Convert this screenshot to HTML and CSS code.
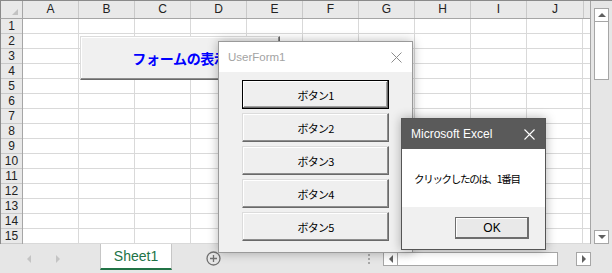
FILE: index.html
```html
<!DOCTYPE html>
<html lang="ja">
<head>
    <meta charset="UTF-8">
    <title>Excel - UserForm</title>
    <link rel="stylesheet" href="styles.css">
</head>
<body>
<div class="excel">
    <div class="main">
        <div class="sheet">
            <div class="corner"><span class="tri"></span></div>
            <div class="colheads">
                <div class="ch">A</div>
                <div class="ch">B</div>
                <div class="ch">C</div>
                <div class="ch">D</div>
                <div class="ch">E</div>
                <div class="ch">F</div>
                <div class="ch">G</div>
                <div class="ch">H</div>
                <div class="ch">I</div>
                <div class="ch wide">J</div>
            </div>
            <div class="rowheads">
                <div class="rh">1</div>
                <div class="rh">2</div>
                <div class="rh">3</div>
                <div class="rh">4</div>
                <div class="rh">5</div>
                <div class="rh">6</div>
                <div class="rh">7</div>
                <div class="rh">8</div>
                <div class="rh">9</div>
                <div class="rh">10</div>
                <div class="rh">11</div>
                <div class="rh">12</div>
                <div class="rh">13</div>
                <div class="rh">14</div>
                <div class="rh">15</div>
            </div>
            <div class="cells">
                <button class="form-btn">フォームの表示</button>
            </div>
        </div>
        <div class="vscroll">
            <div class="sb-btn"><span class="arr up"></span></div>
            <div class="vthumb"></div>
            <div class="vtrack"></div>
            <div class="sb-btn"><span class="arr down"></span></div>
        </div>
    </div>

    <div class="tabbar">
        <div class="nav">
            <span class="arr left light"></span>
            <span class="arr right light"></span>
        </div>
        <div class="tab">Sheet1</div>
        <div class="add">
            <svg width="15" height="15" viewBox="0 0 15 15">
                <circle cx="7.5" cy="7.5" r="6.5" fill="none" stroke="#707070" stroke-width="1.3"/>
                <path d="M7.5 4v7M4 7.5h7" stroke="#707070" stroke-width="1.3"/>
            </svg>
        </div>
        <div class="spacer"></div>
        <div class="dots"><span></span><span></span><span></span></div>
        <div class="hscroll">
            <div class="sb-btn"><span class="arr left"></span></div>
            <div class="hthumb"></div>
            <div class="htrack"></div>
            <div class="sb-btn"><span class="arr right"></span></div>
        </div>
        <div class="br"></div>
    </div>

    <div class="userform">
        <div class="uf-title">
            <span>UserForm1</span>
            <svg width="11" height="11" viewBox="0 0 11 11">
                <path d="M0.5 0.5l10 10M10.5 0.5l-10 10" stroke="#8c8c8c" stroke-width="1"/>
            </svg>
        </div>
        <div class="uf-body">
            <button class="uf-btn default">ボタン1</button>
            <button class="uf-btn">ボタン2</button>
            <button class="uf-btn">ボタン3</button>
            <button class="uf-btn">ボタン4</button>
            <button class="uf-btn">ボタン5</button>
        </div>
    </div>

    <div class="msgbox">
        <div class="mb-title">
            <span>Microsoft Excel</span>
            <svg width="11" height="11" viewBox="0 0 11 11">
                <path d="M0.5 0.5l10 10M10.5 0.5l-10 10" stroke="#ffffff" stroke-width="1.1"/>
            </svg>
        </div>
        <div class="mb-body">クリックしたのは、1番目</div>
        <div class="mb-foot">
            <button class="ok">OK</button>
        </div>
    </div>
</div>
</body>
</html>
```

FILE: styles.css
```css
* {
    box-sizing: border-box;
}

body {
    margin: 0;
    font-family: "Liberation Sans", "Noto Sans CJK JP", sans-serif;
    background-color: #e6e6e6;
}

.excel {
    position: relative;
    width: 612px;
    height: 273px;
    background-color: #e6e6e6;
    border-top: 1px solid #8a8a8a;
    overflow: hidden;
}

/* sheet area */

.main {
    display: flex;
    height: 243px;
}

.sheet {
    width: 591px;
    display: grid;
    grid-template-columns: 23px 1fr;
    grid-template-rows: 18px 1fr;
    border-right: 1px solid #a6a6a6;
    background-color: #fff;
}

.corner {
    position: relative;
    background-color: #e9e9e9;
    border-left: 1px solid #8a8a8a;
    border-right: 1px solid #a6a6a6;
    border-bottom: 1px solid #a6a6a6;
}

.tri {
    position: absolute;
    right: 4px;
    bottom: 3px;
    width: 0;
    height: 0;
    border-left: 6px solid transparent;
    border-bottom: 6px solid #c2c2c2;
}

.colheads {
    display: flex;
    background-color: #e9e9e9;
    border-bottom: 1px solid #a6a6a6;
    overflow: hidden;
}

.ch {
    flex: none;
    width: 56px;
    border-right: 1px solid #c9c9c9;
    text-align: center;
    font-size: 12px;
    line-height: 17px;
    color: #222;
}

.ch.wide {
    width: 57px;
}

.rowheads {
    background-color: #e9e9e9;
    border-left: 1px solid #8a8a8a;
    border-right: 1px solid #a6a6a6;
}

.rh {
    height: 15px;
    border-bottom: 1px solid #c9c9c9;
    text-align: center;
    font-size: 12px;
    line-height: 14px;
    color: #222;
}

.cells {
    position: relative;
    background-color: #fff;
    background-image:
        linear-gradient(to right, transparent 55px, #d9d9d9 55px),
        linear-gradient(to bottom, transparent 14px, #d9d9d9 14px);
    background-size: 56px 100%, 100% 15px;
}

.form-btn {
    position: absolute;
    left: 57px;
    top: 17px;
    width: 200px;
    height: 44px;
    padding: 0;
    background-color: #f0f0f0;
    border: 1px solid;
    border-color: #dcdcdc #696969 #696969 #dcdcdc;
    box-shadow: inset -1px -1px 0 #8e8e8e, inset 1px 1px 0 #fff;
    color: #0000ff;
    font-family: "Noto Sans CJK JP", sans-serif;
    font-weight: bold;
    font-size: 14px;
    letter-spacing: -0.3px;
}

/* scrollbars */

.vscroll {
    width: 21px;
    display: flex;
    flex-direction: column;
    padding: 7px 0 0 3px;
}

.sb-btn {
    flex: none;
    width: 15px;
    height: 14px;
    background-color: #fff;
    border: 1px solid #a6a6a6;
    display: flex;
    align-items: center;
    justify-content: center;
}

.vthumb {
    width: 15px;
    height: 58px;
    background-color: #fff;
    border: 1px solid #a6a6a6;
    border-top: none;
}

.vtrack {
    flex: 1;
}

.arr {
    width: 0;
    height: 0;
}

.arr.up {
    border-left: 4px solid transparent;
    border-right: 4px solid transparent;
    border-bottom: 4px solid #606060;
}

.arr.down {
    border-left: 4px solid transparent;
    border-right: 4px solid transparent;
    border-top: 4px solid #606060;
}

.arr.left {
    border-top: 4px solid transparent;
    border-bottom: 4px solid transparent;
    border-right: 4px solid #606060;
}

.arr.right {
    border-top: 4px solid transparent;
    border-bottom: 4px solid transparent;
    border-left: 4px solid #606060;
}

.arr.light.left {
    border-right-color: #c4c4c4;
}

.arr.light.right {
    border-left-color: #c4c4c4;
}

/* sheet tabs */

.tabbar {
    display: flex;
    align-items: center;
    height: 29px;
}

.nav {
    width: 100px;
    display: flex;
    align-items: center;
    gap: 25px;
    padding-left: 27px;
}

.tab {
    align-self: flex-start;
    width: 72px;
    height: 26px;
    background-color: #fff;
    border-left: 1px solid #c6c6c6;
    border-right: 1px solid #c6c6c6;
    border-bottom: 2px solid #217346;
    color: #217346;
    font-size: 14px;
    line-height: 24px;
    text-align: center;
}

.add {
    margin-left: 34px;
    width: 15px;
    height: 15px;
}

.add svg {
    display: block;
}

.spacer {
    flex: 1;
}

.dots {
    width: 3px;
    display: flex;
    flex-direction: column;
    gap: 2px;
}

.dots span {
    width: 2px;
    height: 2px;
    background-color: #a8a8a8;
}

.hscroll {
    margin-left: 12px;
    width: 208px;
    height: 14px;
    display: flex;
}

.hthumb {
    width: 160px;
    background-color: #fff;
    border: 1px solid #a6a6a6;
    border-left: none;
}

.htrack {
    flex: 1;
}

.br {
    width: 21px;
}

/* userform window */

.userform {
    position: absolute;
    left: 218px;
    top: 40px;
    width: 195px;
    height: 212px;
    background-color: #f0f0f0;
    border: 1px solid #9a9a9a;
    box-shadow: 0 0 10px rgba(0, 0, 0, 0.28);
    display: flex;
    flex-direction: column;
}

.uf-title {
    height: 30px;
    background-color: #fff;
    display: flex;
    align-items: center;
    justify-content: space-between;
    padding: 0 10px 0 9px;
    color: #a3a3a3;
    font-size: 11.5px;
}

.uf-body {
    display: flex;
    flex-direction: column;
    align-items: center;
    gap: 4px;
    padding-top: 8px;
}

.uf-btn {
    width: 147px;
    height: 29px;
    padding: 0;
    background-color: #efefef;
    border: 1px solid;
    border-color: #dcdcdc #696969 #696969 #dcdcdc;
    box-shadow: inset -1px -1px 0 #8e8e8e, inset 1px 1px 0 #fff;
    font-family: "Noto Sans CJK JP", sans-serif;
    font-size: 11px;
    letter-spacing: -0.8px;
    color: #000;
}

.uf-btn.default {
    border-color: #000;
    box-shadow: inset -1px -1px 0 #696969, inset 1px 1px 0 #fff, inset -2px -2px 0 #a0a0a0;
}

/* message box */

.msgbox {
    position: absolute;
    left: 401px;
    top: 117px;
    width: 145px;
    height: 132px;
    background-color: #f0f0f0;
    border: 1px solid #555;
    box-shadow: 0 0 10px rgba(0, 0, 0, 0.3);
    display: flex;
    flex-direction: column;
}

.mb-title {
    height: 30px;
    background-color: #5a5a5a;
    color: #fff;
    display: flex;
    align-items: center;
    justify-content: space-between;
    padding: 0 10px 0 9px;
    font-size: 12px;
}

.mb-body {
    height: 58px;
    background-color: #fff;
    display: flex;
    align-items: center;
    padding-left: 12px;
    font-family: "Noto Sans CJK JP", sans-serif;
    font-size: 10.5px;
    letter-spacing: -1.3px;
    color: #000;
}

.mb-foot {
    flex: 1;
    display: flex;
    align-items: center;
    justify-content: flex-end;
    padding-right: 16px;
}

.ok {
    width: 74px;
    height: 22px;
    padding: 0;
    background-color: #e9e9e9;
    border: 1px solid #6d6d6d;
    box-shadow: inset -1px -1px 0 #6d6d6d, inset 1px 1px 0 #fff;
    font-family: "Liberation Sans", sans-serif;
    font-size: 12px;
    color: #000;
}
```
